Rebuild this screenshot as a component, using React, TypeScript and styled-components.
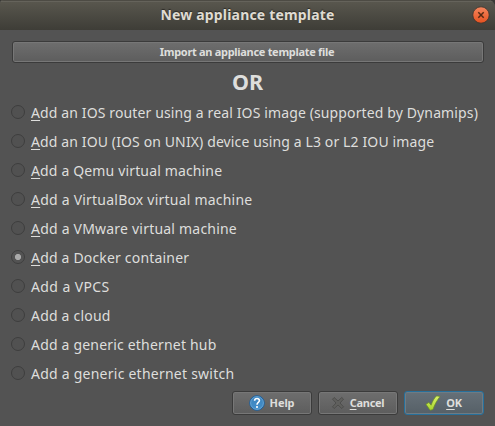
import React, { useState } from "react";
import styled, { createGlobalStyle, css } from "styled-components";

const GlobalStyle = createGlobalStyle`
  * { box-sizing: border-box; }
  html, body { margin: 0; padding: 0; background: #3a3936; }
  body { overflow: hidden; }
`;

const Dialog = styled.main`
  display: flex;
  flex-direction: column;
  width: 495px;
  height: 426px;
  background: #535353;
  border-radius: 4px 7px 0 0;
  overflow: hidden;
  color: #dededc;
  font-family: "Noto Sans", "Open Sans", sans-serif;
`;

const TitleBar = styled.header`
  display: grid;
  grid-template-columns: 28px 1fr 28px;
  align-items: center;
  flex: none;
  height: 30px;
  background: linear-gradient(#5a584f, #3e3d37);
  box-shadow: inset 0 1px 0 #4d4b44, inset 0 2px 0 #65635b;
`;

const Title = styled.h1`
  grid-column: 2;
  margin: 0;
  text-align: center;
  font-size: 14px;
  line-height: 20px;
  font-weight: 700;
  white-space: nowrap;
  color: #dfdbd2;
  text-shadow: 0 -1px 1px #2b2a26;
`;

const CloseButton = styled.button`
  display: grid;
  width: 18px;
  height: 18px;
  padding: 0;
  margin-left: 5px;
  border: 0;
  background: none;
`;

const Content = styled.div`
  display: flex;
  flex-direction: column;
  flex: 1;
  padding: 11px 11px 11px;
`;

const buttonFace = css`
  display: flex;
  align-items: center;
  justify-content: center;
  padding: 0;
  border: 1px solid #3b3b3b;
  border-radius: 3px;
  background: linear-gradient(#6e6e6e, #5d5d5d);
  box-shadow: inset 0 0 0 1px #777;
  color: #dededc;
  font: 700 11px/16px "Noto Sans", "Open Sans", sans-serif;
  white-space: nowrap;
`;

const ImportButton = styled.button`
  ${buttonFace}
  flex: none;
  align-self: flex-end;
  height: 22px;
  width: 472px;
  padding-right: 2px;
`;

const Fitted = styled.span<{ $spacing: number }>`
  letter-spacing: ${(p) => p.$spacing}px;
`;

const OrHeading = styled.h2`
  margin: 4px 0 0;
  text-align: center;
  font-size: 21.5px;
  line-height: 29px;
  font-weight: 700;
`;

const Options = styled.div`
  display: flex;
  flex-direction: column;
  margin-top: 2px;
`;

const Option = styled.label`
  display: flex;
  align-items: center;
  gap: 6px;
  height: 29px;
`;

const Radio = styled.input`
  appearance: none;
  flex: none;
  width: 14px;
  height: 14px;
  margin: 0 0 1px;
  border: 1px solid #3e3e3e;
  border-radius: 50%;
  background: #515151;
  &:checked {
    background: radial-gradient(circle, #a9a9a9 0 2.7px, #535353 3.5px);
  }
`;

const OptionText = styled.span<{ $spacing: number }>`
  font-size: 14px;
  line-height: 20px;
  white-space: nowrap;
  letter-spacing: ${(p) => p.$spacing}px;
`;

const Mnemonic = styled.span`
  text-decoration: underline 1px;
  text-underline-offset: 2px;
  text-decoration-skip-ink: none;
`;

const Actions = styled.footer`
  display: flex;
  justify-content: flex-end;
  gap: 6px;
  margin-top: auto;
`;

const ActionButton = styled.button<{ $primary?: boolean }>`
  ${buttonFace}
  width: 80px;
  height: 24px;
  gap: 5px;
  padding-right: 1px;
  ${(p) =>
    p.$primary &&
    css`
      border-color: #26709c;
      background: linear-gradient(#667078, #566067);
      box-shadow: inset 0 0 0 1px #6d7b84;
    `}
`;

const CloseIcon = () => (
  <svg width="18" height="18" viewBox="0 0 18 18">
    <defs>
      <linearGradient id="close" x2="0" y2="1">
        <stop stopColor="#f5875f" />
        <stop offset="1" stopColor="#e4511f" />
      </linearGradient>
    </defs>
    <circle cx="9" cy="9" r="8.2" fill="url(#close)" stroke="#38332d" strokeWidth=".8" />
    <path d="M6.3 6.3l5.4 5.4M11.7 6.3l-5.4 5.4" stroke="#542913" strokeWidth="1.5" />
  </svg>
);

const HelpIcon = () => (
  <svg width="16" height="16" viewBox="0 0 16 16">
    <defs>
      <linearGradient id="help" x2="0" y2="1">
        <stop stopColor="#3c83bd" />
        <stop offset="1" stopColor="#448fca" />
      </linearGradient>
    </defs>
    <circle cx="8" cy="8" r="7.3" fill="url(#help)" stroke="#1f5f9b" />
    <circle cx="8" cy="8" r="6.4" fill="none" stroke="#77afd9" strokeWidth=".7" />
    <path d="M5.6 5.8C5.7 2.8 10.6 2.8 10.4 5.8C10.3 7.5 8 7.4 8 9.7" fill="none" stroke="#fff" strokeWidth="1.6" />
    <circle cx="8" cy="12" r="1.1" fill="#fff" />
  </svg>
);

const CancelIcon = () => (
  <svg width="14" height="14" viewBox="0 0 14 14">
    <path
      d="M1.5 3.2L3.2 1.5L7 5L10.8 1.5L12.5 3.2L9 7L12.5 10.8L10.8 12.5L7 9L3.2 12.5L1.5 10.8L5 7Z"
      fill="#60605e"
      stroke="#494947"
      strokeWidth=".8"
    />
  </svg>
);

const CheckIcon = () => (
  <svg width="16" height="16" viewBox="0 0 16 16">
    <defs>
      <linearGradient id="check" x2="0" y2="1">
        <stop stopColor="#dcf26a" />
        <stop offset="1" stopColor="#a5d42d" />
      </linearGradient>
    </defs>
    <path
      d="M1 9.3L3.9 7.5L6.1 10.2C7.5 6.2 9.2 3 11.6 .9L15 1.5C12 5.3 9.6 9.6 7.9 14.6L5.1 15.2Z"
      fill="url(#check)"
      stroke="#6d9420"
      strokeWidth=".7"
      strokeLinejoin="round"
    />
  </svg>
);

const options = [
  { label: "Add an IOS router using a real IOS image (supported by Dynamips)", key: true, spacing: 0.125 },
  { label: "Add an IOU (IOS on UNIX) device using a L3 or L2 IOU image", key: true, spacing: 0.12 },
  { label: "Add a Qemu virtual machine", key: true, spacing: 0.15 },
  { label: "Add a VirtualBox virtual machine", key: true, spacing: 0.22 },
  { label: "Add a VMware virtual machine", key: true, spacing: 0.21 },
  { label: "Add a Docker container", key: true, spacing: 0.18 },
  { label: "Add a VPCS", key: false, spacing: 0.4 },
  { label: "Add a cloud", key: false, spacing: 0.2 },
  { label: "Add a generic ethernet hub", key: false, spacing: 0.19 },
  { label: "Add a generic ethernet switch", key: false, spacing: 0.24 },
];

export default function App() {
  const [selected, setSelected] = useState(5);
  return (
    <>
      <GlobalStyle />
      <Dialog>
        <TitleBar>
          <Title><Fitted $spacing={0.18}>New appliance template</Fitted></Title>
          <CloseButton aria-label="Close"><CloseIcon /></CloseButton>
        </TitleBar>
        <Content>
          <ImportButton><Fitted $spacing={-0.3}>Import an appliance template file</Fitted></ImportButton>
          <OrHeading>OR</OrHeading>
          <Options>
            {options.map((o, i) => (
              <Option key={o.label}>
                <Radio type="radio" name="template" checked={selected === i} onChange={() => setSelected(i)} />
                <OptionText $spacing={o.spacing}>
                  {o.key ? <><Mnemonic>A</Mnemonic>{o.label.slice(1)}</> : o.label}
                </OptionText>
              </Option>
            ))}
          </Options>
          <Actions>
            <ActionButton><HelpIcon /><Fitted $spacing={-0.1}>Help</Fitted></ActionButton>
            <ActionButton><CancelIcon /><Fitted $spacing={-0.3}><Mnemonic>C</Mnemonic>ancel</Fitted></ActionButton>
            <ActionButton $primary><CheckIcon /><Fitted $spacing={-0.2}><Mnemonic>O</Mnemonic>K</Fitted></ActionButton>
          </Actions>
        </Content>
      </Dialog>
    </>
  );
}
